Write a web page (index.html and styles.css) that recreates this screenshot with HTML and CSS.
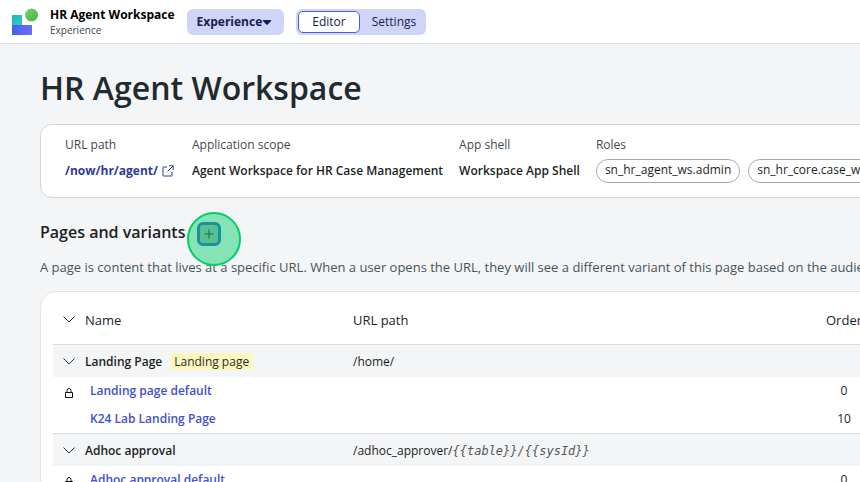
FILE: index.html
```html
<!DOCTYPE html>
<html lang="en">
<head>
<meta charset="utf-8">
<title>HR Agent Workspace</title>
<link rel="stylesheet" href="styles.css">
</head>
<body>
<header class="topbar">
  <svg class="logo" width="26" height="27" viewBox="0 0 26 27" aria-hidden="true">
    <defs>
      <linearGradient id="g1" x1="0" y1="0" x2="1" y2="1"><stop offset="0" stop-color="#16b3c0"/><stop offset="1" stop-color="#35cfc4"/></linearGradient>
      <linearGradient id="g2" x1="0" y1="0" x2="1" y2="0"><stop offset="0" stop-color="#4361e8"/><stop offset="1" stop-color="#6b6ff5"/></linearGradient>
      <linearGradient id="g3" x1="0" y1="0" x2="1" y2="1"><stop offset="0" stop-color="#7bd65c"/><stop offset="1" stop-color="#3fb34b"/></linearGradient>
    </defs>
    <rect x="0" y="7" width="10" height="10" fill="url(#g1)"/>
    <rect x="0" y="17" width="20" height="10" fill="url(#g2)"/>
    <circle cx="19.500" cy="7" r="6.500" fill="url(#g3)"/>
  </svg>
  <div class="brand">
    <div class="brand-name">HR Agent Workspace</div>
    <div class="brand-sub">Experience</div>
  </div>
  <button class="menu-button" type="button">Experience<svg class="caret" width="10" height="5" viewBox="0 0 10 5" aria-hidden="true"><path d="M1.200 0H8.800Q9.600 .2 9 1L5.800 4.500Q5 5.200 4.200 4.500L1 1Q.4 .2 1.200 0Z" fill="currentColor"/></svg></button>
  <div class="switch">
    <button class="switch-item is-active" type="button">Editor</button>
    <button class="switch-item" type="button">Settings</button>
  </div>
</header>
<main class="page">
  <h1>HR Agent Workspace</h1>
  <section class="summary">
    <div class="field field-url">
      <div class="label">URL path</div>
      <a class="value path-link" href="#">/now/hr/agent/
        <svg width="12" height="12" viewBox="0 0 12 12" fill="none" stroke="currentColor" aria-hidden="true"><path d="M5 2H1.500Q1 2 1 2.500V10.500Q1 11 1.500 11H9.500Q10 11 10 10.500V7M7 .8H11.200V5M11 1L5.500 6.500"/></svg>
      </a>
    </div>
    <div class="field">
      <div class="label">Application scope</div>
      <div class="value">Agent Workspace for HR Case Management</div>
    </div>
    <div class="field">
      <div class="label">App shell</div>
      <div class="value">Workspace App Shell</div>
    </div>
    <div class="field">
      <div class="label">Roles</div>
      <div class="roles"><span class="pill">sn_hr_agent_ws.admin</span><span class="pill">sn_hr_core.case_writer</span></div>
    </div>
  </section>
  <div class="section-head">
    <h2>Pages and variants</h2>
    <div class="add-wrap">
      <button class="add" type="button" aria-label="Add page"><svg width="12" height="12" viewBox="0 0 12 12" fill="none" stroke="currentColor" aria-hidden="true"><path d="M6 1.500V10.500M1.500 6H10.500"/></svg></button>
      <span class="spot"></span>
    </div>
  </div>
  <p class="intro">A page is content that lives at a specific URL. When a user opens the URL, they will see a different variant of this page based on the audience.</p>
  <section class="card">
    <table>
      <colgroup><col class="c-icon"><col class="c-name"><col class="c-path"><col class="c-order"></colgroup>
      <thead>
        <tr><th><svg class="chev" viewBox="0 0 12 7"><path d="M.5 .5L6 6L11.500 .5"/></svg></th><th>Name</th><th>URL path</th><th class="order">Order</th></tr>
      </thead>
      <tbody>
        <tr class="group"><td><svg class="chev" viewBox="0 0 12 7"><path d="M.5 .5L6 6L11.500 .5"/></svg></td><td><b>Landing Page</b><mark>Landing page</mark></td><td>/home/</td><td></td></tr>
        <tr class="item"><td><svg class="lock" viewBox="0 0 8 10"><path d="M.5 4.500H7.500V9.500H.5ZM2 4.500V2.500Q2 .5 4 .5T6 2.500V4.500"/></svg></td><td><a href="#">Landing page default</a></td><td></td><td class="order">0</td></tr>
        <tr class="item"><td></td><td><a href="#">K24 Lab Landing Page</a></td><td></td><td class="order">10</td></tr>
        <tr class="group"><td><svg class="chev" viewBox="0 0 12 7"><path d="M.5 .5L6 6L11.500 .5"/></svg></td><td><b>Adhoc approval</b></td><td>/adhoc_approver/<i>{{table}}/{{sysId}}</i></td><td></td></tr>
        <tr class="item"><td><svg class="lock" viewBox="0 0 8 10"><path d="M.5 4.500H7.500V9.500H.5ZM2 4.500V2.500Q2 .5 4 .5T6 2.500V4.500"/></svg></td><td><a href="#">Adhoc approval default</a></td><td></td><td class="order">0</td></tr>
      </tbody>
    </table>
  </section>
</main>
</body>
</html>
```
FILE: styles.css
```css
* { box-sizing: border-box; }
body {
  margin: 0;
  height: 100vh;
  overflow: hidden;
  background: #f4f5f7;
  color: #1b1f23;
  font: 12px/16px "Open Sans", "Noto Sans", sans-serif;
}
button { font: inherit; border: 0; padding: 0; color: #17214f; }
a { color: #4150cf; text-decoration: none; }
h1, h2, p { margin: 0; }

.topbar {
  display: flex;
  align-items: center;
  height: 44px;
  padding: 0 12px;
  background: #fff;
  border-bottom: 1px solid #dadfe3;
}
.logo { margin-right: 12px; }
.brand { margin-right: 12px; }
.brand-name { font-weight: 700; color: #000; }
.brand-sub { font-size: 10px; color: #3d474c; line-height: 14px; }
.menu-button {
  display: flex;
  align-items: center;
  height: 26px;
  padding: 0 12px 0 10px;
  margin-right: 12px;
  border-radius: 6px;
  background: #cfd5f9;
  font-weight: 700;
}
.caret { margin-top: 2px; }
.switch { display: flex; padding: 2px; border-radius: 6px; background: #cfd5f9; }
.switch-item { height: 22px; padding: 0 8px 0 12px; background: none; border-radius: 5px; }
.switch-item.is-active { padding: 0 13px; background: #fff; border: 1px solid #4f5fd0; }

.page { padding: 24px 0 0 40px; margin-right: -60px; }
h1 { font-size: 32px; line-height: 40px; font-weight: 600; color: #202a2f; }
.summary {
  display: flex;
  gap: 16px;
  margin-top: 16px;
  padding: 12px 24px;
  height: 74px;
  background: #fff;
  border: 1px solid #d3d6d9;
  border-radius: 12px;
  white-space: nowrap;
}
.field { flex: none; }
.field-url { width: 111px; }
.label { color: #3f4a50; }
.value { display: flex; align-items: center; gap: 4px; margin-top: 10px; font-weight: 600; }
.path-link { color: #2e3a9c; font-weight: 700; }
.roles { display: flex; gap: 8px; margin-top: 6px; }
.pill { height: 24px; padding: 2px 8px; border: 1px solid #a4a9ad; border-radius: 12px; }

.section-head { display: flex; align-items: flex-start; gap: 12px; height: 24px; margin-top: 24px; }
h2 { font-size: 16px; line-height: 20px; font-weight: 600; }
.add-wrap { position: relative; }
.add {
  display: grid;
  place-items: center;
  width: 24px;
  height: 24px;
  border: 3px solid #2e62d0;
  border-radius: 6px;
  background: #a3b3b5;
}
.spot {
  position: absolute;
  left: -10px;
  top: -10px;
  width: 54px;
  height: 54px;
  border: 2px solid #00cf63;
  border-radius: 50%;
  background: rgba(0, 207, 99, .45);
  pointer-events: none;
}
.intro { margin-top: 11px; font-size: 13px; line-height: 20px; color: #48535a; white-space: nowrap; }
.card {
  margin-top: 14px;
  padding: 0 12px;
  background: #fff;
  border: 1px solid #e1e3e6;
  border-radius: 16px;
}
table { width: 100%; table-layout: fixed; border-collapse: collapse; }
.c-icon { width: 32px; }
.c-name { width: 268px; }
.c-order { width: 126px; }
th, td { padding: 0; text-align: left; font-weight: 400; white-space: nowrap; }
th { height: 52px; padding-top: 4px; font-size: 13px; }
th:first-child, td:first-child { padding-left: 10px; }
.order { text-align: center; }
.group td { height: 33px; padding-top: 2px; background: #f4f5f7; border-top: 1px solid #dadde0; }
.item td { height: 28px; }
.item a { padding-left: 5px; font-weight: 600; }
b { font-weight: 600; }
i { font-family: "DejaVu Sans Mono", monospace; color: #555; }
mark { margin-left: 8px; padding: 0 4px; background: #fcf6c0; color: #2e2e1e; }
svg { flex: none; }
.chev { display: block; width: 12px; height: 7px; fill: none; stroke: #30383c; }
.lock { display: block; width: 8px; height: 10px; margin: 4px 0 0 2px; fill: none; stroke: #111; }
```
